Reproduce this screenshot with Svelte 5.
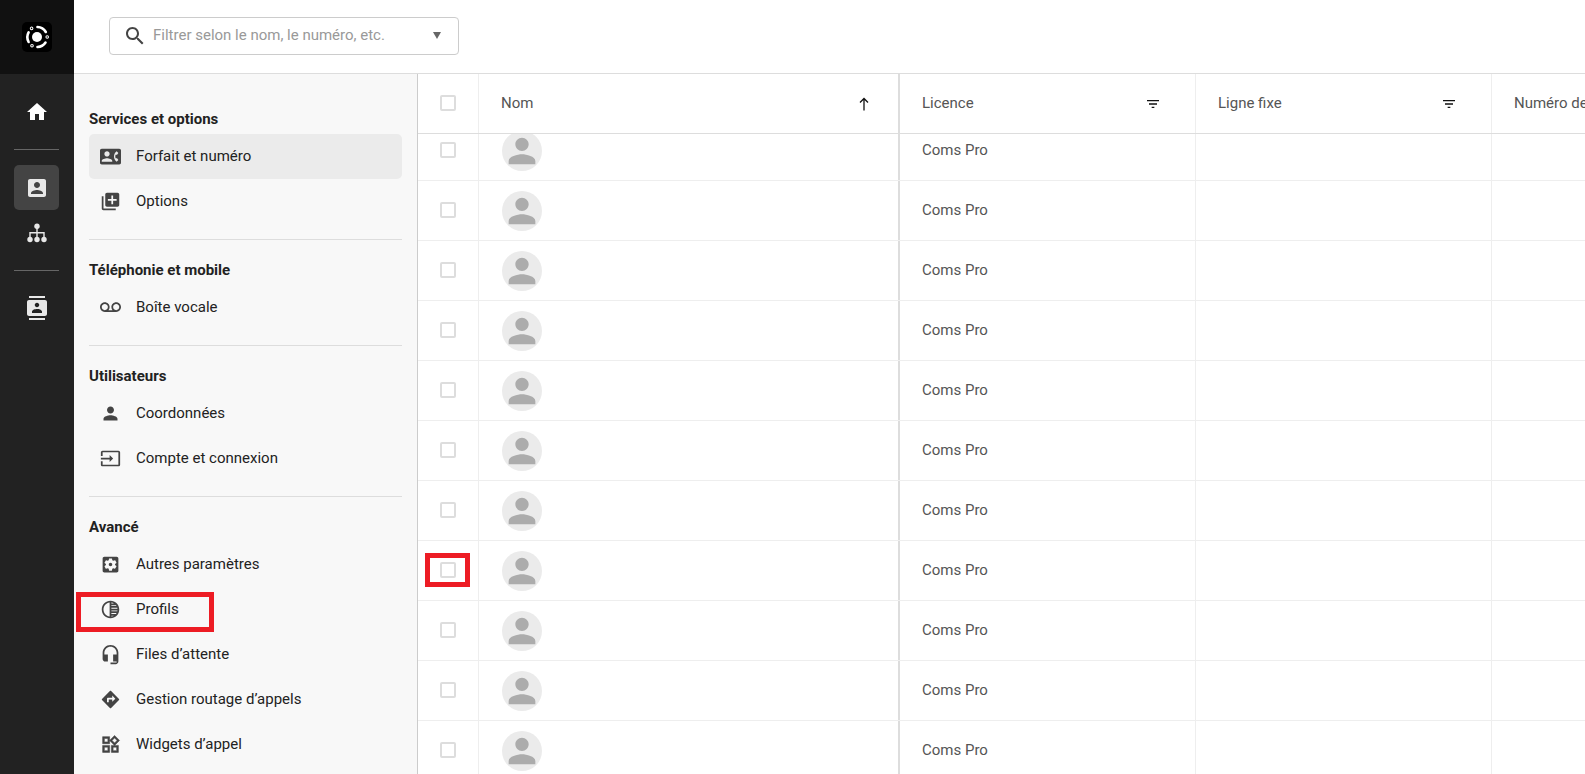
<script>
  const icons = {
    phone: 'M22 3H2C.9 3 0 3.9 0 5v14c0 1.1.9 2 2 2h20c1.1 0 1.99-.9 1.99-2L24 5c0-1.1-.9-2-2-2zM8 6c1.66 0 3 1.34 3 3s-1.34 3-3 3-3-1.34-3-3 1.34-3 3-3zm6 12H2v-1c0-2 4-3.1 6-3.1s6 1.1 6 3.1v1zm3.85-4h1.64L21 16l-1.99 1.99c-1.31-.98-2.28-2.38-2.73-3.99-.18-.64-.28-1.31-.28-2s.1-1.36.28-2c.45-1.62 1.42-3.01 2.73-3.99L21 8l-1.51 2h-1.64c-.22.63-.35 1.3-.35 2s.13 1.37.35 2z',
    library: 'M4 6H2v14c0 1.1.9 2 2 2h14v-2H4V6zm16-4H8c-1.1 0-2 .9-2 2v12c0 1.1.9 2 2 2h12c1.1 0 2-.9 2-2V4c0-1.1-.9-2-2-2zm-1 9h-4v4h-2v-4H9V9h4V5h2v4h4v2z',
    voicemail: 'M18.5 6C15.46 6 13 8.46 13 11.5c0 1.33.47 2.55 1.26 3.5H9.74c.79-.95 1.26-2.17 1.26-3.5C11 8.46 8.54 6 5.5 6S0 8.46 0 11.5 2.46 17 5.5 17h13c3.04 0 5.5-2.46 5.5-5.5S21.54 6 18.5 6zm-13 9C3.57 15 2 13.43 2 11.5S3.57 8 5.5 8 9 9.57 9 11.5 7.43 15 5.5 15zm13 0c-1.93 0-3.5-1.57-3.5-3.5S16.57 8 18.5 8 22 9.57 22 11.5 20.43 15 18.5 15z',
    person: 'M12 12c2.21 0 4-1.79 4-4s-1.79-4-4-4-4 1.79-4 4 1.79 4 4 4zm0 2c-2.67 0-8 1.34-8 4v2h16v-2c0-2.66-5.33-4-8-4z',
    input: 'M21 3.01H3c-1.1 0-2 .9-2 2V9h2V4.99h18v14.03H3V15H1v4.01c0 1.1.9 1.98 2 1.98h18c1.1 0 2-.88 2-1.98v-14c0-1.11-.9-2-2-2zM11 16l4-4-4-4v3H1v2h10v3z',
    settings: 'M12 10c-1.1 0-2 .9-2 2s.9 2 2 2 2-.9 2-2-.9-2-2-2zm7-7H5c-1.11 0-2 .9-2 2v14c0 1.1.89 2 2 2h14c1.11 0 2-.9 2-2V5c0-1.1-.89-2-2-2zm-1.75 9c0 .23-.02.46-.05.68l1.48 1.16c.13.11.17.3.08.45l-1.4 2.42c-.09.15-.27.21-.43.15l-1.74-.7c-.36.28-.76.51-1.18.69l-.26 1.85c-.03.17-.18.3-.35.3h-2.8c-.17 0-.32-.13-.35-.29l-.26-1.85c-.43-.18-.82-.41-1.18-.69l-1.74.7c-.16.06-.34 0-.43-.15l-1.4-2.42c-.09-.15-.05-.34.08-.45l1.48-1.16c-.03-.23-.05-.46-.05-.69 0-.23.02-.46.05-.68l-1.48-1.16c-.13-.11-.17-.3-.08-.45l1.4-2.42c.09-.15.27-.21.43-.15l1.74.7c.36-.28.76-.51 1.18-.69l.26-1.85c.03-.17.18-.3.35-.3h2.8c.17 0 .32.13.35.29l.26 1.85c.43.18.82.41 1.18.69l1.74-.7c.16-.06.34 0 .43.15l1.4 2.42c.09.15.05.34-.08.45l-1.48 1.16c.03.23.05.46.05.69z',
    tonality: 'M12 2C6.48 2 2 6.48 2 12s4.48 10 10 10 10-4.48 10-10S17.52 2 12 2zm-1 17.93c-3.94-.49-7-3.85-7-7.93s3.05-7.44 7-7.93v15.86zm2-15.86c1.03.13 2 .45 2.87.93H13v-.93zM13 7h5.24c.25.31.48.65.68 1H13V7zm0 3h6.74c.08.33.15.66.19 1H13v-1zm0 9.93V19h2.87c-.87.48-1.84.8-2.87.93zM18.24 17H13v-1h5.92c-.2.35-.43.69-.68 1zm1.5-3H13v-1h6.93c-.04.34-.11.67-.19 1z',
    headset: 'M12 1c-4.97 0-9 4.03-9 9v7c0 1.66 1.34 3 3 3h3v-8H5v-2c0-3.87 3.13-7 7-7s7 3.13 7 7v2h-4v8h4v1h-7v2h6c1.66 0 3-1.34 3-3V10c0-4.97-4.03-9-9-9z',
    directions: 'M21.71 11.29l-9-9c-.39-.39-1.02-.39-1.41 0l-9 9c-.39.39-.39 1.02 0 1.41l9 9c.39.39 1.02.39 1.41 0l9-9c.39-.38.39-1.01 0-1.41zM14 14.5V12h-4v3H8v-4c0-.55.45-1 1-1h5V7.5l3.5 3.5-3.5 3.5z',
    widgets: 'M16.66 4.52l2.83 2.83-2.83 2.83-2.83-2.83 2.83-2.83M9 5v4H5V5h4m10 10v4h-4v-4h4M9 15v4H5v-4h4m7.66-13.31L11 7.34 16.66 13l5.66-5.66-5.66-5.65zM11 3H3v8h8V3zm10 10h-8v8h8v-8zm-10 0H3v8h8v-8z'
  };

  const sections = [
    { title: 'Services et options', items: [
      { label: 'Forfait et numéro', icon: 'phone', active: true },
      { label: 'Options', icon: 'library' }
    ] },
    { title: 'Téléphonie et mobile', items: [{ label: 'Boîte vocale', icon: 'voicemail' }] },
    { title: 'Utilisateurs', items: [
      { label: 'Coordonnées', icon: 'person' },
      { label: 'Compte et connexion', icon: 'input' }
    ] },
    { title: 'Avancé', items: [
      { label: 'Autres paramètres', icon: 'settings' },
      { label: 'Profils', icon: 'tonality' },
      { label: 'Files d’attente', icon: 'headset' },
      { label: 'Gestion routage d’appels', icon: 'directions' },
      { label: 'Widgets d’appel', icon: 'widgets' }
    ] }
  ];

  const columns = ['Licence', 'Ligne fixe', 'Numéro de'];
  const rows = Array.from({ length: 11 }, () => 'Coms Pro');
</script>

<div class="page">
  <nav class="rail">
    <div class="logo-box">
      <div class="logo">
        <svg width="26" height="26" viewBox="0 0 26 26" fill="none" stroke="#fff" stroke-width="2.6" stroke-linecap="round">
          <circle cx="13" cy="13" r="5" fill="#fff" stroke="none" />
          <path d="M13.5 3a10 10 0 0 1 8.3 5" />
          <path d="M21.5 18.5a10 10 0 0 1-8 4.5" />
          <path d="M4.6 18a10 10 0 0 1 0-9.6" />
          <circle cx="7.6" cy="4.4" r="0.5" />
          <circle cx="23.2" cy="13" r="0.5" />
          <circle cx="8" cy="21.8" r="0.5" />
        </svg>
      </div>
    </div>
    <div class="rail-group home">
      <svg width="24" height="24" viewBox="0 0 24 24" fill="#fff"><path d="M10 20v-6h4v6h5v-8h3L12 3 2 12h3v8z" /></svg>
    </div>
    <hr class="rail-line" />
    <div class="rail-btn active">
      <svg width="24" height="24" viewBox="0 0 24 24" fill="#e8e8e8"><path d="M3 5v14c0 1.1.89 2 2 2h14c1.1 0 2-.9 2-2V5c0-1.1-.9-2-2-2H5c-1.11 0-2 .9-2 2zm12 4c0 1.66-1.34 3-3 3s-3-1.34-3-3 1.34-3 3-3 3 1.34 3 3zm-9 8c0-2 4-3.1 6-3.1s6 1.1 6 3.1v1H6v-1z" /></svg>
    </div>
    <div class="rail-btn">
      <svg width="24" height="24" viewBox="0 0 24 24" fill="#e8e8e8">
        <circle cx="12" cy="5.2" r="2.7" />
        <circle cx="5" cy="18.5" r="2.7" />
        <circle cx="12" cy="18.5" r="2.7" />
        <circle cx="19" cy="18.5" r="2.7" />
        <path d="M11.3 6h1.4v5h7v5h-1.4v-3.6h-5.6V16h-1.4v-3.6H5.7V16H4.3v-5h7z" />
      </svg>
    </div>
    <hr class="rail-line" />
    <div class="rail-group">
      <svg width="24" height="24" viewBox="0 0 24 24" fill="#e8e8e8"><path d="M20 0H4v2h16V0zM4 24h16v-2H4v2zM20 4H4c-1.1 0-2 .9-2 2v12c0 1.1.9 2 2 2h16c1.1 0 2-.9 2-2V6c0-1.1-.9-2-2-2zm-8 2.75c1.24 0 2.25 1.01 2.25 2.25s-1.01 2.25-2.25 2.25S9.75 10.24 9.75 9 10.76 6.75 12 6.75zM17 17H7v-1.5c0-1.67 3.33-2.5 5-2.5s5 .83 5 2.5V17z" /></svg>
    </div>
  </nav>

  <div class="main">
    <header class="topbar">
      <div class="search">
        <svg width="24" height="24" viewBox="0 0 24 24" fill="#444"><path d="M15.5 14h-.79l-.28-.27C15.41 12.59 16 11.11 16 9.5 16 5.91 13.09 3 9.5 3S3 5.91 3 9.5 5.91 16 9.5 16c1.61 0 3.09-.59 4.23-1.57l.27.28v.79l5 4.99L20.49 19l-4.99-5zm-6 0C7.01 14 5 11.99 5 9.5S7.01 5 9.5 5 14 7.01 14 9.5 11.99 14 9.5 14z" /></svg>
        <span class="placeholder">Filtrer selon le nom, le numéro, etc.</span>
        <span class="caret"></span>
      </div>
    </header>

    <div class="content">
      <aside class="side">
        {#each sections as section}
          <section class="group">
            <h3>{section.title}</h3>
            {#each section.items as item}
              <div class="item" class:active={item.active}>
                <span class="item-icon" class:bold={item.icon === 'widgets'}>
                  <svg width="21" height="21" viewBox="0 0 24 24" fill="#444"><path d={icons[item.icon]} /></svg>
                </span>
                <span class="item-label">{item.label}</span>
              </div>
            {/each}
          </section>
        {/each}
      </aside>

      <div class="table">
        <div class="row head">
          <div class="cell check"><span class="box"></span></div>
          <div class="cell name">
            <span class="name-label">Nom</span>
            <svg class="sort" width="14" height="14" viewBox="0 0 14 14" fill="none" stroke="#111" stroke-width="1.3"><path d="M7 13.5V1.5M3 5.5l4-4 4 4" /></svg>
          </div>
          {#each columns as col}
            <div class="cell col">
              <span class="col-label">{col}</span>
              <svg class="filter" width="16" height="16" viewBox="0 0 24 24" fill="#111"><path d="M10 18h4v-2h-4v2zM3 6v2h18V6H3zm3 7h12v-2H6v2z" /></svg>
            </div>
          {/each}
        </div>
        <div class="body">
          <div class="rows">
            {#each rows as licence}
              <div class="row">
                <div class="cell check"><span class="box"></span></div>
                <div class="cell name">
                  <span class="avatar">
                    <svg width="40" height="40" viewBox="0 0 24 24" fill="#acacac"><path d="M12 12c2.21 0 4-1.79 4-4s-1.79-4-4-4-4 1.79-4 4 1.79 4 4 4zm0 2c-2.67 0-8 1.34-8 4v2h16v-2c0-2.66-5.33-4-8-4z" /></svg>
                  </span>
                </div>
                <div class="cell col">{licence}</div>
                <div class="cell col"></div>
                <div class="cell col"></div>
              </div>
            {/each}
          </div>
        </div>
      </div>
    </div>
  </div>

  <div class="mark mark-profile"></div>
  <div class="mark mark-check"></div>
</div>

<style>
  :global(body) {
    margin: 0;
    overflow: hidden;
  }

  .page {
    display: flex;
    position: relative;
    width: 1585px;
    height: 774px;
    overflow: hidden;
    background: #fff;
    font-family: Roboto, sans-serif;
    font-size: 15px;
    color: #222;
  }

  .rail {
    display: flex;
    flex-direction: column;
    align-items: center;
    flex: 0 0 74px;
    box-sizing: border-box;
    padding-right: 1px;
    background: #222;
  }

  .logo-box {
    display: flex;
    align-items: center;
    justify-content: center;
    align-self: stretch;
    height: 74px;
    margin-right: -1px;
    background: #111;
  }

  .logo {
    display: flex;
    align-items: center;
    justify-content: center;
    width: 30px;
    height: 30px;
    margin-right: 1px;
    border-radius: 5px;
    background: #000;
  }

  .rail-group {
    display: flex;
    align-items: center;
    justify-content: center;
    height: 44px;
  }

  .home {
    margin-top: 16px;
  }

  .rail-line {
    width: 45px;
    height: 1px;
    margin: 15px 0;
    border: 0;
    background: #666;
  }

  .rail-btn {
    display: flex;
    align-items: center;
    justify-content: center;
    width: 45px;
    height: 45px;
    border-radius: 5px;
  }

  .rail-btn.active {
    background: #444;
  }

  .main {
    display: flex;
    flex-direction: column;
    flex: 1;
    min-width: 0;
  }

  .topbar {
    flex: 0 0 73px;
    height: 73px;
    padding: 0 0 0 35px;
    border-bottom: 1px solid #ddd;
  }

  .search {
    display: flex;
    align-items: center;
    box-sizing: border-box;
    width: 350px;
    height: 38px;
    margin-top: 17px;
    padding: 0 14px 0 13px;
    border: 1px solid #ccc;
    border-radius: 4px;
  }

  .placeholder {
    flex: 1;
    margin-left: 6px;
    padding-bottom: 2px;
    color: #999;
  }

  .caret {
    width: 0;
    height: 0;
    margin-right: 3px;
    margin-bottom: 2px;
    border-top: 7px solid #666;
    border-left: 4.5px solid transparent;
    border-right: 4.5px solid transparent;
  }

  .content {
    display: flex;
    flex: 1;
    min-height: 0;
  }

  .side {
    flex: 0 0 344px;
    box-sizing: border-box;
    padding: 35px 15px 0;
    border-right: 1px solid #ccc;
    background: #f8f8f8;
  }

  .group {
    padding-bottom: 15px;
    margin-bottom: 20px;
    border-bottom: 1px solid #ddd;
  }

  .group:last-child {
    border-bottom: 0;
  }

  h3 {
    margin: 0 0 5px;
    font-size: 15px;
    font-weight: 700;
    line-height: 20px;
    color: #222;
  }

  .item {
    display: flex;
    align-items: center;
    height: 45px;
    border-radius: 5px;
  }

  .item.active {
    background: #ebebeb;
  }

  .item-icon {
    display: flex;
    justify-content: center;
    width: 43px;
    margin-right: 4px;
  }

  .item-icon.bold svg {
    stroke: #444;
    stroke-width: 0.6;
  }

  .item-label {
    padding-bottom: 2px;
  }

  .table {
    flex: 1;
    min-width: 0;
    overflow: hidden;
  }

  .row {
    display: flex;
    height: 60px;
    box-sizing: border-box;
    border-bottom: 1px solid #eee;
  }

  .row.head {
    position: relative;
    z-index: 1;
    background: #fff;
    border-bottom: 1px solid #ddd;
  }

  .cell {
    display: flex;
    align-items: center;
    box-sizing: border-box;
    border-right: 1px solid #eee;
    color: #555;
  }

  .cell.check {
    flex: 0 0 61px;
    justify-content: center;
  }

  .cell.name {
    flex: 0 0 421px;
    justify-content: space-between;
    padding: 0 27px 0 22px;
    border-right: 2px solid #ddd;
  }

  .name-label {
    padding-bottom: 2px;
  }

  .cell.name .avatar {
    margin-left: 1px;
  }

  .cell.col {
    flex: 0 0 296px;
    justify-content: space-between;
    padding: 0 34px 2px 22px;
  }

  .filter {
    margin-top: 2px;
  }

  .box {
    box-sizing: border-box;
    width: 16px;
    height: 16px;
    margin-bottom: 1px;
    border: 2px solid #ddd;
    border-radius: 2px;
    background: #fff;
  }

  .avatar {
    display: flex;
    align-items: center;
    justify-content: center;
    width: 40px;
    height: 40px;
    margin-top: 1px;
    border-radius: 50%;
    background: #ebebeb;
  }

  .body {
    height: 641px;
    overflow: hidden;
  }

  .rows {
    margin-top: -13px;
  }

  .col-label {
    white-space: nowrap;
  }

  .mark {
    position: absolute;
    box-sizing: border-box;
    border: 5px solid #ed1c24;
  }

  .mark-profile {
    left: 76px;
    top: 592px;
    width: 138px;
    height: 40px;
  }

  .mark-check {
    left: 425px;
    top: 553px;
    width: 45px;
    height: 34px;
  }
</style>
